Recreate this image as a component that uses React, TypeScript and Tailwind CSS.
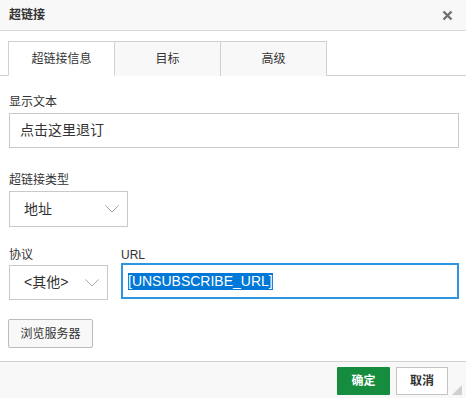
import { useState } from 'react'

const tabs = ['超链接信息', '目标', '高级']

function Chevron() {
  return (
    <svg width="14" height="8" viewBox="0 0 14 8" fill="none">
      <path d="M0.5 0.5 L7 7 L13.5 0.5" stroke="#a8a8a8" strokeWidth="1" />
    </svg>
  )
}

function Select({ value, width, height }: { value: string; width: string; height: string }) {
  return (
    <div
      className={`${width} ${height} border border-[#c9c9c9] bg-white flex items-center justify-between pl-[14px] pr-[8px] text-[14px] text-[#333]`}
    >
      <span>{value}</span>
      <Chevron />
    </div>
  )
}

export default function App() {
  const [active, setActive] = useState(0)

  return (
    <div
      className="w-[466px] h-[398px] bg-white flex flex-col overflow-hidden text-[#333]"
      style={{ fontFamily: '"Liberation Sans", "Noto Sans CJK SC", sans-serif' }}
    >
      <div className="h-[31px] shrink-0 bg-[#f8f8f8] border-b border-[#d6d6d6] flex items-center justify-between pl-[9px] pr-[13px]">
        <span className="text-[12px] font-bold">超链接</span>
        <svg width="11" height="11" viewBox="0 0 11 11">
          <path d="M1.5 1.5 L9.5 9.5 M9.5 1.5 L1.5 9.5" stroke="#6f6f6f" strokeWidth="2.4" />
        </svg>
      </div>

      <div className="flex-1 pt-[10px]">
        <div className="flex pl-2 border-b border-[#d1d1d1] h-[35px]">
          {tabs.map((t, i) => (
            <button
              key={t}
              onClick={() => setActive(i)}
              className={`w-[107px] h-[35px] text-[12px] border border-[#d1d1d1] -ml-px first:ml-0 ${
                i === active ? 'bg-white border-b-white relative z-10' : 'bg-[#f8f8f8] border-b-0 h-[34px]'
              }`}
            >
              {t}
            </button>
          ))}
        </div>

        <div className="px-[9px]">
          <div className="mt-[18px] text-[12px] leading-[17px]">显示文本</div>
          <div className="mt-[2px] h-[35px] w-[450px] border border-[#c9c9c9] flex items-center pl-[10px] text-[14px]">
            点击这里退订
          </div>

          <div className="mt-[24px] text-[12px] leading-[17px]">超链接类型</div>
          <div className="mt-[2px]">
            <Select value="地址" width="w-[119px]" height="h-[36px]" />
          </div>

          <div className="mt-[20px] flex gap-[13px]">
            <div>
              <div className="text-[12px] leading-[17px]">协议</div>
              <div className="mt-[1px]">
                <Select value="<其他>" width="w-[99px]" height="h-[35px]" />
              </div>
            </div>
            <div>
              <div className="text-[12px] leading-[17px]">URL</div>
              <div className="-mt-[1px] w-[338px] h-[36px] border-2 border-[#2e96e0] flex items-center pl-[5px] text-[14px]">
                <span className="bg-[#0078d7] text-white leading-[17px]">[UNSUBSCRIBE_URL]</span>
              </div>
            </div>
          </div>

          <button className="mt-[19px] -ml-px h-[29px] w-[85px] border border-[#bcbcbc] rounded-[2px] bg-[#f8f8f8] text-[12px]">
            浏览服务器
          </button>
        </div>
      </div>

      <div className="h-[37px] shrink-0 bg-[#f8f8f8] border-t border-[#d1d1d1] flex items-start justify-end gap-[6px] pt-[5px] pr-[18px] relative">
        <button className="h-[28px] w-[53px] bg-[#158c3e] text-white text-[12px] font-bold rounded-[1px]">确定</button>
        <button className="h-[28px] w-[52px] bg-white border border-[#c4c4c4] text-[12px] font-bold text-[#333]">
          取消
        </button>
        <svg className="absolute right-[4px] bottom-[3px]" width="10" height="10" viewBox="0 0 10 10">
          <path d="M10 0 L10 10 L0 10 Z" fill="#cfcfcf" />
        </svg>
      </div>
    </div>
  )
}
